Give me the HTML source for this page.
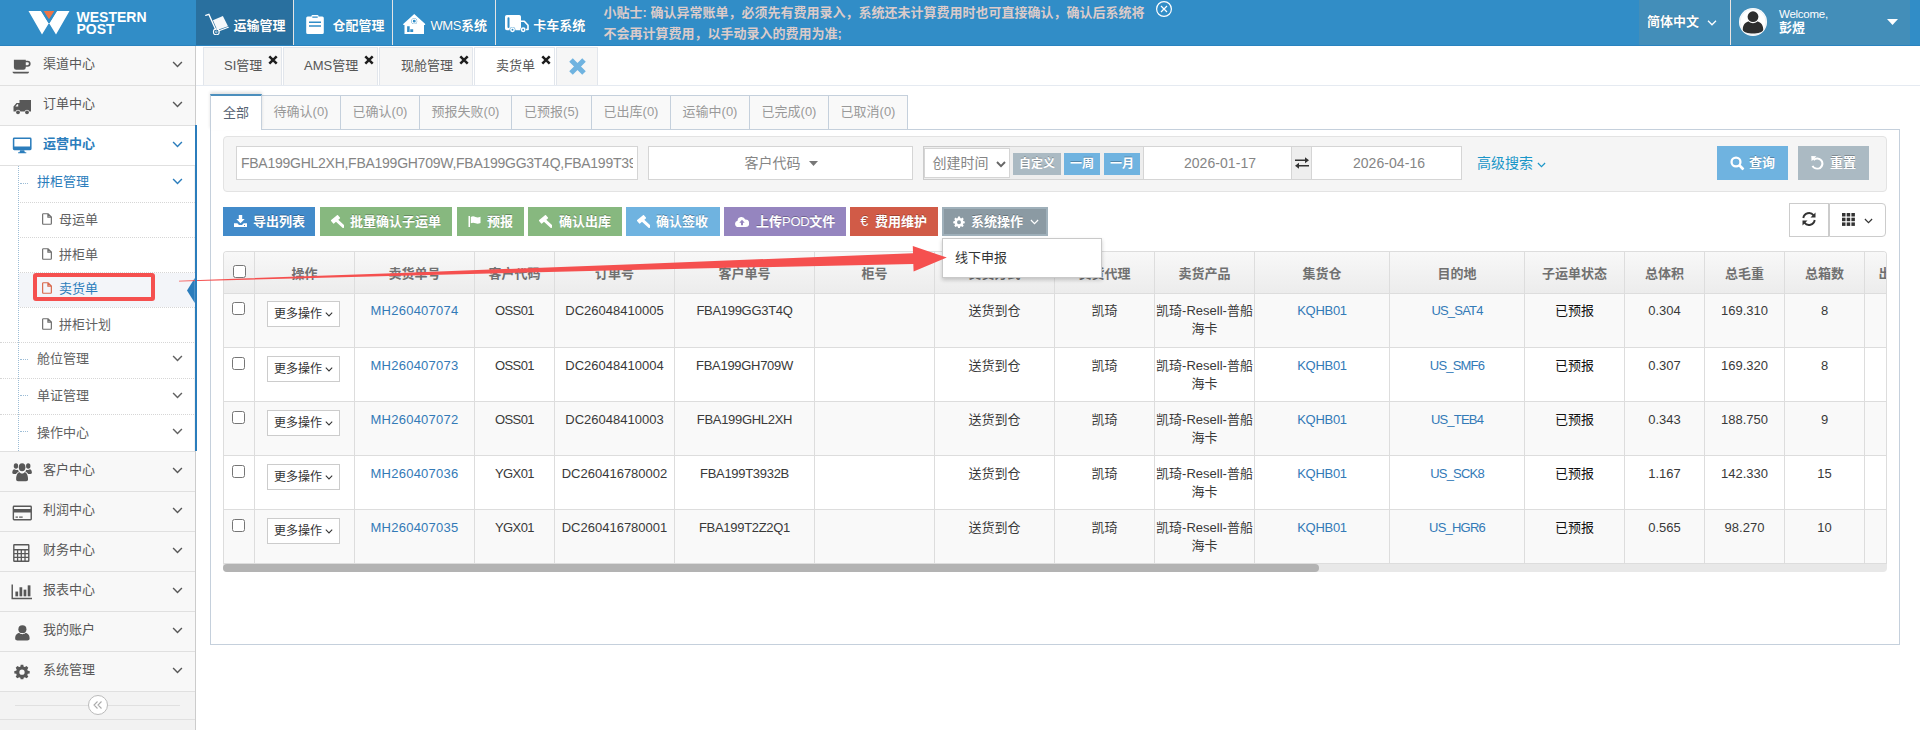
<!DOCTYPE html>
<html lang="zh-CN">
<head>
<meta charset="utf-8">
<title>卖货单</title>
<style>
*{box-sizing:border-box;margin:0;padding:0}
html,body{width:1920px;height:730px;overflow:hidden;background:#fff}
body{font-family:"Liberation Sans","Noto Sans CJK SC",sans-serif;font-size:13px;color:#393939;position:relative;line-height:1.428571}
.abs{position:absolute}
svg{display:block;overflow:visible}
svg use{fill:currentColor}
#hdr{position:absolute;left:0;top:0;width:1920px;height:46px;background:#318dc7;border-bottom:1px solid #2a83bf;z-index:5}
.logo{color:#fff;font-weight:bold;font-size:14px;line-height:16px;letter-spacing:0}
#hdr .nav{position:absolute;top:0;height:45px;color:#fff;font-weight:bold;font-size:13px;line-height:45px;white-space:nowrap}
#hdr .nav.on{background:#29709f}
#hdr .sep{position:absolute;top:0;width:1px;height:45px;background:#e4e4e4}
#hdr .nav span{position:absolute;top:3px;text-shadow:0 0 1px rgba(0,0,0,.25)}
#tip{position:absolute;left:603.5px;top:1.5px;width:560px;font-size:13px;font-weight:bold;color:#dbcbca;line-height:21px;white-space:nowrap}
#ublk{position:absolute;left:1639px;top:0;width:271px;height:45px;background:#438eb9}
#side{position:absolute;left:0;top:45px;width:196px;height:685px;background:#f2f2f2;border-right:1px solid #ccc}
.mi{position:absolute;left:0;width:195px;height:41px;background:#f8f8f8;border-top:1px solid #e0e0e0;border-bottom:1px solid #e0e0e0;color:#585858;font-size:13px;line-height:36.4px}
.mi.on{background:#fff;color:#2b7dbc;font-weight:bold}
.mi .t{position:absolute;left:43px;top:0}
.mi svg.ch{position:absolute;left:172px;top:15.4px}
.sm{position:absolute;left:0;width:194px;background:#fff;color:#616161;font-size:13px}
.sm .t{position:absolute;white-space:nowrap}
.tab{position:absolute;top:47px;height:38px;background:#f6f6f6;border:1px solid #e2e6ec;border-bottom:none;color:#555;font-size:13px;line-height:36px;white-space:nowrap}
.tab .x{position:absolute;top:6.500px;width:10px;height:10px}
.st{position:absolute;top:95px;height:35px;background:#f9f9f9;border:1px solid #c5d0dc;color:#999;font-size:13px;line-height:32px;text-align:center;white-space:nowrap}
.inp{position:absolute;height:34px;border:1px solid #d5d5d5;background:#fff;color:#858585;font-size:14px;line-height:32px;text-align:center;white-space:nowrap}
.sbtn{position:absolute;top:153px;height:22px;color:#fff;font-size:12px;font-weight:bold;line-height:22px;text-align:center;text-shadow:0 -1px 0 rgba(0,0,0,.25)}
.qb{top:146px;width:71px;height:34px;color:#fff;font-weight:bold;font-size:13px;line-height:34px;text-shadow:0 -1px 0 rgba(0,0,0,.25)}
.qb span{position:absolute;top:0}
.btn{position:absolute;top:207px;height:29px;color:#fff;font-weight:bold;font-size:13px;line-height:29px;white-space:nowrap;text-shadow:0 -1px 0 rgba(0,0,0,.25)}
.btn span{position:absolute;top:0}
#tbl{position:absolute;left:223px;top:251px;width:1664px;height:314px;overflow:hidden;border:1px solid #ddd;border-bottom:none;border-radius:4px 4px 0 0}
.th{position:absolute;top:0;height:42px;border-right:1px solid #ddd;border-bottom:1px solid #ddd;background:linear-gradient(#f8f8f8,#ececec);color:#707070;font-weight:bold;font-size:13px;line-height:43px;text-align:center;white-space:nowrap;overflow:hidden}
.td{position:absolute;height:54px;border-right:1px solid #ddd;border-bottom:1px solid #ddd;padding:9px 0 0;color:#393939;font-size:13px;line-height:18px;text-align:center;overflow:hidden}
.lnk{color:#337ab7}
.odd{background:#f9f9f9}
.even{background:#fff}
.cb{position:absolute;width:13px;height:13px;border:1px solid #767676;border-radius:2.5px;background:#fff}
.more{position:absolute;left:12px;top:8px;width:73px;height:26px;border:1px solid #ccc;background:#fff;font-size:12px;line-height:24px;color:#333;text-align:left;padding-left:6px;white-space:nowrap}

</style>
</head>
<body>
<svg width="0" height="0" style="position:absolute">
<defs>
<symbol id="i-chev" viewBox="0 0 10 6"><path d="M1 .8 L5 4.8 L9 .8" fill="none" stroke="currentColor" stroke-width="1.3"/></symbol>
<symbol id="i-chev2" viewBox="0 0 10 7"><path d="M1 1 L5 5.2 L9 1" fill="none" stroke="currentColor" stroke-width="1.9"/></symbol>
<symbol id="i-coffee" preserveAspectRatio="none" viewBox="0 0 20 20"><path d="M2 3 H14.5 V4 H16.5 A3 3 0 0 1 16.5 10.2 H14.5 V11 A2.5 2.5 0 0 1 12 13.5 H4.5 A2.5 2.5 0 0 1 2 11 Z M14.5 5.6 V8.6 H16.3 A1.5 1.5 0 0 0 16.3 5.6 Z" fill-rule="evenodd"/><path d="M.5 15.5 H18 C18 17 16.5 17.3 15.5 17.3 H3 C2 17.3 .5 17 .5 15.5Z"/></symbol>
<symbol id="i-truck" preserveAspectRatio="none" viewBox="0 0 20 20"><path d="M7.5 3 H19 V14.5 H17.4 A2.5 2.5 0 0 0 12.6 14.5 H8.4 A2.5 2.5 0 0 0 3.600 14.5 H1.5 V9.500 L4.5 6 H7.5 Z M3.4 9.600 H6.2 V7.2 H5.2 Z" fill-rule="evenodd"/><circle cx="6" cy="15.3" r="1.9"/><circle cx="15" cy="15.3" r="1.900"/></symbol>
<symbol id="i-desktop" preserveAspectRatio="none" viewBox="0 0 20 20"><path d="M2.200 2.500 H17.8 A1.400 1.400 0 0 1 19.200 3.900 V13.600 A1.400 1.400 0 0 1 17.8 15 H2.200 A1.400 1.400 0 0 1 .8 13.600 V3.900 A1.400 1.400 0 0 1 2.200 2.500 Z M2.300 4 V11.400 H17.700 V4 Z" fill-rule="evenodd"/><path d="M8 15 H12 L12.600 17 H14 V18 H6 V17 H7.400 Z"/></symbol>
<symbol id="i-users" preserveAspectRatio="none" viewBox="0 0 22 20"><circle cx="11" cy="6.500" r="3.600"/><path d="M4.500 17.500 C4.500 12.500 7 11 8.300 11 C9 11.800 10 12.100 11 12.100 C12 12.100 13 11.800 13.700 11 C15 11 17.500 12.500 17.500 17.500 C17.500 18.600 16.500 19 15.500 19 H6.500 C5.500 19 4.500 18.600 4.500 17.500Z"/><circle cx="4.300" cy="5.400" r="2.400"/><circle cx="17.700" cy="5.400" r="2.400"/><path d="M.3 11.500 C.3 9.200 1.500 8.300 2.500 8.300 C3.500 9 5.500 9.100 6.600 8.600 C6.800 9.500 7.100 10 7.600 10.400 C6 10.700 5 11.500 4.400 12.500 H1.800 C.8 12.500 .3 12.200 .3 11.500Z"/><path d="M21.700 11.500 C21.700 9.200 20.500 8.300 19.500 8.300 C18.500 9 16.500 9.100 15.400 8.600 C15.200 9.500 14.900 10 14.400 10.400 C16 10.700 17 11.500 17.600 12.500 H20.200 C21.200 12.500 21.700 12.200 21.700 11.500Z"/></symbol>
<symbol id="i-card" preserveAspectRatio="none" viewBox="0 0 22 20"><path d="M2.200 2.500 H19.800 A1.500 1.500 0 0 1 21.300 4 V16 A1.500 1.500 0 0 1 19.800 17.500 H2.200 A1.500 1.500 0 0 1 .7 16 V4 A1.500 1.500 0 0 1 2.200 2.500 Z M2.200 4 V6 H19.800 V4 Z M2.200 9.500 V16 H19.800 V9.500 Z M3.800 13.500 H6.300 V14.800 H3.800 Z M7.600 13.500 H11.400 V14.800 H7.600 Z" fill-rule="evenodd"/></symbol>
<symbol id="i-calc" preserveAspectRatio="none" viewBox="0 0 20 20"><path d="M2.500 1 H17.500 A1.300 1.300 0 0 1 18.800 2.300 V17.700 A1.300 1.300 0 0 1 17.500 19 H2.500 A1.300 1.300 0 0 1 1.200 17.700 V2.300 A1.300 1.300 0 0 1 2.500 1 Z M2.700 2.500 V6 H17.300 V2.500 Z M2.700 7.500 V10 H5.300 V7.500 Z M6.700 7.500 V10 H9.300 V7.500 Z M10.700 7.500 V10 H13.300 V7.500 Z M14.700 7.500 V10 H17.300 V7.500 Z M2.700 11.300 V13.800 H5.300 V11.300 Z M6.700 11.300 V13.800 H9.300 V11.300 Z M10.700 11.300 V13.800 H13.300 V11.300 Z M14.700 11.300 V13.800 H17.300 V11.300 Z M2.700 15.100 V17.600 H5.300 V15.100 Z M6.700 15.100 V17.600 H9.300 V15.100 Z M10.700 15.100 V17.600 H13.300 V15.100 Z M14.700 15.100 V17.600 H17.300 V15.100 Z" fill-rule="evenodd"/></symbol>
<symbol id="i-bars" preserveAspectRatio="none" viewBox="0 0 22 20"><path d="M.5 2.500 H2 V16.500 H21.500 V18 H.5 Z"/><rect x="4.500" y="10" width="2.800" height="5"/><rect x="8.700" y="5.500" width="2.800" height="9.500"/><rect x="12.900" y="8" width="2.800" height="7"/><rect x="17.100" y="3.500" width="2.800" height="11.500"/></symbol>
<symbol id="i-user" preserveAspectRatio="none" viewBox="0 0 20 20"><circle cx="10" cy="5.800" r="4.300"/><path d="M2.300 16 C2.300 11.500 5 10 6.700 10 C7.600 10.900 8.800 11.300 10 11.300 C11.200 11.300 12.400 10.900 13.300 10 C15 10 17.700 11.500 17.700 16 C17.700 17.500 16.500 18.200 15.300 18.200 H4.700 C3.500 18.200 2.300 17.500 2.300 16Z"/></symbol>
<symbol id="i-cog" preserveAspectRatio="none" viewBox="0 0 20 20"><path d="M8.400 1 H11.600 L12.100 3.400 L13.600 4 L15.700 2.700 L17.900 4.900 L16.600 7 L17.200 8.500 L19.600 9 V12.100 L17.200 12.600 L16.600 14.100 L17.900 16.200 L15.700 18.400 L13.600 17.100 L12.100 17.700 L11.600 20 H8.400 L7.900 17.700 L6.400 17.100 L4.300 18.400 L2.100 16.200 L3.400 14.100 L2.800 12.600 L.4 12.100 V9 L2.800 8.500 L3.400 7 L2.100 4.900 L4.300 2.700 L6.400 4 L7.900 3.400 Z M10 7.200 A3.300 3.300 0 1 0 10 13.800 A3.300 3.300 0 1 0 10 7.200 Z" fill-rule="evenodd"/></symbol>
<symbol id="i-file" viewBox="0 0 11 13"><path d="M1.500 .7 H6.700 L10.300 4.300 V11.500 A.8 .8 0 0 1 9.500 12.300 H1.500 A.8 .8 0 0 1 .7 11.500 V1.500 A.8 .8 0 0 1 1.500 .7 Z M6.500 1 V4.500 H10" fill="none" stroke="currentColor" stroke-width="1.300"/></symbol>
<symbol id="i-cart" viewBox="0 0 24 22"><path d="M.7 2.3 L3.900 1.400 L10.500 16.200" fill="none" stroke="currentColor" stroke-width="1.300" stroke-linecap="round"/><circle cx="11.300" cy="18.900" r="2.900" fill="none" stroke="currentColor" stroke-width="1.100"/><circle cx="11.300" cy="18.900" r=".9" fill="none" stroke="currentColor" stroke-width=".6"/><path d="M14 17.800 L23.300 14.300" fill="none" stroke="currentColor" stroke-width="1.200" stroke-linecap="round"/><path d="M7.900 7.300 L17.900 2.900 L23 13.200 L12.250 17 Z" opacity=".95"/></symbol>
<symbol id="i-clip" viewBox="0 0 18 19"><path d="M5.500 .8 A1 1 0 0 1 6.500 0 H11.500 A1 1 0 0 1 12.500 .8 V1.500 H16.300 A1.500 1.500 0 0 1 17.800 3 V17.500 A1.500 1.500 0 0 1 16.300 19 H1.700 A1.500 1.500 0 0 1 .2 17.500 V3 A1.500 1.500 0 0 1 1.700 1.500 H5.500 Z M6.300 1.600 V2.800 H11.700 V1.600 Z M3 6.400 V8 H15 V6.400 Z M3 10.200 V11.800 H15 V10.200 Z" fill-rule="evenodd"/></symbol>
<symbol id="i-house" viewBox="0 0 23 21"><path d="M11.500 0 L22.800 10.300 V11.300 H21.500 V20.500 H1.500 V11.300 H.2 V10.300 Z M11.500 4.300 A3 3 0 1 0 11.500 10.300 A3 3 0 1 0 11.500 4.300 Z M4.200 12.600 V18.400 H6.800 V12.600 Z M7.400 15.600 V18.400 H10.400 V15.600 Z" fill-rule="evenodd"/><circle cx="11.500" cy="7.300" r="2.100" fill="none" stroke="currentColor" stroke-width="1.200"/></symbol>
<symbol id="i-truck2" viewBox="0 0 24 18"><path d="M1.800 0 H14.200 A1.800 1.800 0 0 1 16 1.800 V15.300 H1.800 A1.800 1.800 0 0 1 0 13.500 V1.800 A1.800 1.800 0 0 1 1.800 0 Z M3.500 2.200 A1 1 0 0 0 2.500 3.200 V12 A1 1 0 0 0 3.500 13 A1 1 0 0 0 4.500 12 V3.200 A1 1 0 0 0 3.500 2.200 Z" fill-rule="evenodd"/><path d="M16 6.200 H19.300 L23 10.300 V14.500 H16" fill="none" stroke="currentColor" stroke-width="1.600" stroke-linejoin="round"/><circle cx="7.500" cy="14.800" r="2.900" fill="#318dc7"/><circle cx="18.200" cy="14.800" r="2.900" fill="#318dc7"/><circle cx="7.500" cy="14.800" r="1.700" fill="none" stroke="currentColor" stroke-width="1.500"/><circle cx="18.200" cy="14.800" r="1.700" fill="none" stroke="currentColor" stroke-width="1.500"/></symbol>
<symbol id="i-download" viewBox="0 0 13 12"><path d="M4.800 0 H8.200 V4 H10.700 L6.500 8.300 L2.300 4 H4.800 Z"/><path d="M0 8.300 H3.300 L5 10 H8 L9.700 8.300 H13 V12 H0 Z M10 10 V11 H11 V10 Z" fill-rule="evenodd"/></symbol>
<symbol id="i-gavel" viewBox="0 0 13 13"><g transform="translate(4.500 4.300) rotate(-40)"><rect x="-4.500" y="-2.200" width="9" height="4.400" rx=".7"/></g><g transform="translate(4.500 4.300) rotate(42)"><rect x="1.500" y="-1.500" width="10.300" height="3.100" rx=".5"/></g></symbol>
<symbol id="i-flag" viewBox="0 0 12 11"><rect x="0" y="0" width="1.500" height="11"/><path d="M2.300 1 C4 0 5.500 .3 7 1 C8.500 1.700 10 1.700 12 .8 V7 C10 8 8.500 8 7 7.300 C5.500 6.600 4 6.400 2.300 7.300 Z"/></symbol>
<symbol id="i-cloud" viewBox="0 0 14 11"><path d="M3.200 11 A3.200 3.200 0 0 1 2.500 4.700 A4 4 0 0 1 10.200 3.600 A3.700 3.700 0 0 1 10.800 11 Z M7 3.800 L4.300 6.800 H6 V9.300 H8 V6.800 H9.700 Z" fill-rule="evenodd"/></symbol>
<symbol id="i-search" viewBox="0 0 14 14"><circle cx="5.800" cy="5.800" r="4.300" fill="none" stroke="currentColor" stroke-width="2.200"/><path d="M9 9 L13 13" stroke="currentColor" stroke-width="2.600" fill="none"/></symbol>
<symbol id="i-undo" viewBox="0 0 12 13"><path d="M2.200 3.800 A5 5 0 1 1 1.200 9.500" fill="none" stroke="currentColor" stroke-width="2"/><path d="M0 0 L5 .3 L.3 5 Z"/></symbol>
<symbol id="i-refresh" viewBox="0 0 14 14"><path d="M1.300 6 A5.800 5.800 0 0 1 11.600 3.300" fill="none" stroke="currentColor" stroke-width="1.900"/><path d="M13.500 .5 V5.500 H8.500 Z"/><path d="M12.700 8 A5.800 5.800 0 0 1 2.400 10.700" fill="none" stroke="currentColor" stroke-width="1.900"/><path d="M.5 13.500 V8.500 H5.500 Z"/></symbol>
<symbol id="i-th" viewBox="0 0 13 13"><rect x="0" y="0" width="3.500" height="3.500"/><rect x="4.700" y="0" width="3.500" height="3.500"/><rect x="9.400" y="0" width="3.500" height="3.500"/><rect x="0" y="4.700" width="3.500" height="3.500"/><rect x="4.700" y="4.700" width="3.500" height="3.500"/><rect x="9.400" y="4.700" width="3.500" height="3.500"/><rect x="0" y="9.400" width="3.500" height="3.500"/><rect x="4.700" y="9.400" width="3.500" height="3.500"/><rect x="9.400" y="9.400" width="3.500" height="3.500"/></symbol>
<symbol id="i-exch" viewBox="0 0 14 12"><path d="M0 2.500 H10 V.3 L14 3.300 L10 6.300 V4.100 H0 Z"/><path d="M14 7.900 H4 V5.700 L0 8.700 L4 11.700 V9.500 H14 Z"/></symbol>
</defs>
</svg>

<div id="hdr">
<svg class="abs" style="left:28px;top:10px" width="42" height="25" viewBox="0 0 42 25">
<polygon points="0.5,1 13,1 21,14 29,1 41.5,1 28,24.5 21,13 14,24.5" fill="#fff"/>
<polygon points="15.5,1 26.5,1 21,9.5" fill="#ee7548"/>
<polygon points="13.2,1 15.5,1 21,9.5 26.5,1 28.8,1 21,13.6" fill="#318dc7"/>
</svg>
<div class="abs logo" style="left:76.5px;top:8.5px">WESTERN</div><div class="abs logo" style="left:76.5px;top:21.3px">POST</div>
<div class="nav on" style="left:196px;width:97px"><svg class="" width="24" height="22" style="position:absolute;left:9px;top:12.5px;" ><use href="#i-cart"/></svg><span style="left:37.5px">运输管理</span></div>
<div class="sep" style="left:293px"></div>
<div class="nav" style="left:294px;width:98px"><svg class="" width="18" height="19" style="position:absolute;left:12px;top:15.2px;" ><use href="#i-clip"/></svg><span style="left:38.6px">仓配管理</span></div>
<div class="sep" style="left:392px"></div>
<div class="nav" style="left:393px;width:102px"><svg class="" width="22.5" height="20.5" style="position:absolute;left:10px;top:13.6px;" ><use href="#i-house"/></svg><span style="left:37.5px"><b style="font-weight:normal;letter-spacing:-.4px">WMS</b>系统</span></div>
<div class="sep" style="left:495px"></div>
<div class="nav" style="left:496px;width:100px"><svg class="" width="24" height="18" style="position:absolute;left:9.4px;top:14.9px;" ><use href="#i-truck2"/></svg><span style="left:37.3px">卡车系统</span></div>
<div id="tip">小贴士: 确认异常账单，必须先有费用录入，系统还未计算费用时也可直接确认，确认后系统将<br>不会再计算费用，以手动录入的费用为准;</div>
<svg class="abs" style="left:1155px;top:0px" width="18" height="18" viewBox="0 0 18 18"><circle cx="9" cy="9" r="7.4" fill="none" stroke="#fff" stroke-width="1.2"/><path d="M6 6 L12 12 M12 6 L6 12" stroke="#fff" stroke-width="1.2" fill="none"/></svg>
<div id="ublk">
<div class="abs" style="left:8px;top:11.7px;font-size:13px;font-weight:bold;color:#fff;line-height:20px;text-shadow:0 0 1px rgba(0,0,0,.3)">简体中文</div>
<svg class="" width="10" height="6" style="position:absolute;left:68px;top:20px;color:#fff;" ><use href="#i-chev"/></svg>
<div class="abs" style="left:91px;top:0;width:1px;height:45px;background:#ece4e1"></div>
<svg class="abs" style="left:100px;top:8px" width="28" height="28" viewBox="0 0 28 28"><circle cx="14" cy="14" r="14" fill="#fff"/><circle cx="14" cy="14" r="13" fill="none" stroke="#dfe6ec" stroke-width=".6"/><circle cx="14" cy="8.700" r="5.4" fill="#2e2e2e"/><path d="M3.8 21.5 C3.8 15.5 8 13.6 9.8 13.6 C11 14.8 12.4 15.3 14 15.3 C15.6 15.3 17 14.8 18.2 13.6 C20 13.6 24.2 15.5 24.2 21.5 C24.2 24 19 25.6 14 25.6 C9 25.6 3.8 24 3.8 21.5Z" fill="#2e2e2e"/></svg>
<div class="abs" style="left:140px;top:7px;font-size:11.5px;letter-spacing:-.25px;color:#fff;line-height:15px">Welcome,</div>
<div class="abs" style="left:140px;top:20.4px;font-size:13px;color:#fff;font-weight:bold;line-height:16px">彭煜</div>
<svg class="abs" style="left:248px;top:19px" width="11" height="6" viewBox="0 0 11 6"><polygon points="0,0 11,0 5.5,6" fill="#fff"/></svg>
</div>
</div>
<div id="side">
<div class="mi" style="top:0px"><svg class="" width="19" height="19" style="position:absolute;left:12.35px;top:11.4px;" preserveAspectRatio="none"><use href="#i-coffee"/></svg><span class="t">渠道中心</span><svg class="ch" width="11" height="7" style="" ><use href="#i-chev"/></svg></div>
<div class="mi" style="top:40px"><svg class="" width="20" height="20" style="position:absolute;left:12.35px;top:10.7px;" preserveAspectRatio="none"><use href="#i-truck"/></svg><span class="t">订单中心</span><svg class="ch" width="11" height="7" style="" ><use href="#i-chev"/></svg></div>
<div class="mi on" style="top:80px"><svg class="" width="20.4" height="20.4" style="position:absolute;left:12px;top:9.25px;" preserveAspectRatio="none"><use href="#i-desktop"/></svg><span class="t">运营中心</span><svg class="ch" width="11" height="7" style="" ><use href="#i-chev"/></svg></div>
<div class="sm" style="top:121px;height:285px">
<div class="abs" style="left:18px;top:0;width:0;height:285px;border-left:1px dotted #9dbdd6"></div>
<div class="abs" style="left:0;top:0px;width:194px;height:0;border-top:0"></div><div class="abs" style="left:20px;top:17px;width:8px;height:0;border-top:1px dotted #9dbdd6"></div><div class="t" style="left:37px;top:-2px;line-height:36px;color:#2b7dbc">拼柜管理</div><svg class="" width="11" height="7" style="position:absolute;left:172px;top:12px;color:#2b7dbc;" ><use href="#i-chev"/></svg>
<div class="abs" style="left:20px;top:36px;width:175px;height:0;border-top:1px dotted #d6d6d6"></div><svg class="" width="10" height="12" style="position:absolute;left:41.5px;top:46.5px;color:#6e6e6e;" ><use href="#i-file"/></svg><div class="t" style="left:59px;top:35.5px;line-height:35px;color:#616161">母运单</div>
<div class="abs" style="left:20px;top:71px;width:175px;height:0;border-top:1px dotted #d6d6d6"></div><svg class="" width="10" height="12" style="position:absolute;left:41.5px;top:81.5px;color:#6e6e6e;" ><use href="#i-file"/></svg><div class="t" style="left:59px;top:70.5px;line-height:35px;color:#616161">拼柜单</div>
<div class="abs" style="left:19px;top:107px;width:176px;height:34px;background:#f3f5f9"></div><div class="abs" style="left:20px;top:106px;width:175px;height:0;border-top:1px dotted #d6d6d6"></div><svg class="" width="10" height="12" style="position:absolute;left:41.5px;top:116px;color:#d9684c;" ><use href="#i-file"/></svg><div class="t" style="left:59px;top:105px;line-height:35px;color:#2b7dbc">卖货单</div>
<div class="abs" style="left:20px;top:141px;width:175px;height:0;border-top:1px dotted #d6d6d6"></div><svg class="" width="10" height="12" style="position:absolute;left:41.5px;top:151.5px;color:#6e6e6e;" ><use href="#i-file"/></svg><div class="t" style="left:59px;top:140.5px;line-height:35px;color:#616161">拼柜计划</div>
<div class="abs" style="left:0;top:176px;width:194px;height:0;border-top:1px dotted #d6d6d6"></div><div class="abs" style="left:20px;top:193px;width:8px;height:0;border-top:1px dotted #9dbdd6"></div><div class="t" style="left:37px;top:175px;line-height:36px;color:#616161">舱位管理</div><svg class="" width="11" height="7" style="position:absolute;left:172px;top:189px;color:#616161;" ><use href="#i-chev"/></svg>
<div class="abs" style="left:0;top:212px;width:194px;height:0;border-top:1px dotted #d6d6d6"></div><div class="abs" style="left:20px;top:229px;width:8px;height:0;border-top:1px dotted #9dbdd6"></div><div class="t" style="left:37px;top:211.5px;line-height:36px;color:#616161">单证管理</div><svg class="" width="11" height="7" style="position:absolute;left:172px;top:225.5px;color:#616161;" ><use href="#i-chev"/></svg>
<div class="abs" style="left:0;top:248px;width:194px;height:0;border-top:1px dotted #d6d6d6"></div><div class="abs" style="left:20px;top:265px;width:8px;height:0;border-top:1px dotted #9dbdd6"></div><div class="t" style="left:37px;top:248px;line-height:37px;color:#616161">操作中心</div><svg class="" width="11" height="7" style="position:absolute;left:172px;top:262px;color:#616161;" ><use href="#i-chev"/></svg>
</div>
<div class="abs" style="left:195px;top:80px;width:2px;height:326px;background:#2b7dbc;z-index:3"></div>
<svg class="abs" style="left:187.3px;top:233px" width="7.8" height="25" preserveAspectRatio="none" viewBox="0 0 8 25"><polygon points="8,0 8,25 0,12.5" fill="#2b7dbc"/></svg>
<div class="mi" style="top:406px"><svg class="" width="20.2" height="22.4" style="position:absolute;left:12.05px;top:8.3px;" preserveAspectRatio="none"><use href="#i-users"/></svg><span class="t">客户中心</span><svg class="ch" width="11" height="7" style="" ><use href="#i-chev"/></svg></div>
<div class="mi" style="top:446px"><svg class="" width="20.6" height="19.9" style="position:absolute;left:11.65px;top:10.5px;" preserveAspectRatio="none"><use href="#i-card"/></svg><span class="t">利润中心</span><svg class="ch" width="11" height="7" style="" ><use href="#i-chev"/></svg></div>
<div class="mi" style="top:486px"><svg class="" width="18.6" height="20" style="position:absolute;left:12.1px;top:10.75px;" preserveAspectRatio="none"><use href="#i-calc"/></svg><span class="t">财务中心</span><svg class="ch" width="11" height="7" style="" ><use href="#i-chev"/></svg></div>
<div class="mi" style="top:526px"><svg class="" width="21.5" height="19.1" style="position:absolute;left:11px;top:10.4px;" preserveAspectRatio="none"><use href="#i-bars"/></svg><span class="t">报表中心</span><svg class="ch" width="11" height="7" style="" ><use href="#i-chev"/></svg></div>
<div class="mi" style="top:566px"><svg class="" width="18.8" height="18" style="position:absolute;left:12.95px;top:11.6px;" preserveAspectRatio="none"><use href="#i-user"/></svg><span class="t">我的账户</span><svg class="ch" width="11" height="7" style="" ><use href="#i-chev"/></svg></div>
<div class="mi" style="top:606px"><svg class="" width="16" height="15.6" style="position:absolute;left:14.2px;top:12.2px;" preserveAspectRatio="none"><use href="#i-cog"/></svg><span class="t">系统管理</span><svg class="ch" width="11" height="7" style="" ><use href="#i-chev"/></svg></div>
<div class="abs" style="left:0;top:646px;width:195px;height:29px;background:#f3f3f3;border-top:1px solid #e0e0e0;border-bottom:1px solid #e0e0e0"></div>
<div class="abs" style="left:15px;top:660px;width:165px;height:1px;background:#e0e0e0"></div>
<svg class="abs" style="left:87px;top:649px" width="22" height="22" viewBox="0 0 22 22"><circle cx="11" cy="11" r="9.5" fill="#fff" stroke="#bbb" stroke-width="1"/><path d="M10.5 7.5 L7 11 L10.5 14.5 M14.5 7.5 L11 11 L14.5 14.5" fill="none" stroke="#aaa" stroke-width="1.1"/></svg>
</div>
<div class="abs" style="left:196px;top:85px;width:1724px;height:1px;background:#e5eaf1"></div>
<div class="tab" style="left:203px;width:79px;background:#f6f6f6"><span class="abs" style="left:20px;top:0">SI管理</span><svg class="x" style="left:64px" viewBox="0 0 10 10"><path d="M1.3 1.3 L8.7 8.7 M8.7 1.3 L1.3 8.7" stroke="#1e1e1e" stroke-width="2.5" fill="none"/></svg></div>
<div class="tab" style="left:283px;width:95px;background:#f6f6f6"><span class="abs" style="left:20px;top:0">AMS管理</span><svg class="x" style="left:80px" viewBox="0 0 10 10"><path d="M1.3 1.3 L8.7 8.7 M8.7 1.3 L1.3 8.7" stroke="#1e1e1e" stroke-width="2.5" fill="none"/></svg></div>
<div class="tab" style="left:379px;width:94px;background:#f6f6f6"><span class="abs" style="left:21px;top:0">现舱管理</span><svg class="x" style="left:79px" viewBox="0 0 10 10"><path d="M1.3 1.3 L8.7 8.7 M8.7 1.3 L1.3 8.7" stroke="#1e1e1e" stroke-width="2.5" fill="none"/></svg></div>
<div class="tab" style="left:474px;width:81px;background:#fff"><span class="abs" style="left:21px;top:0">卖货单</span><svg class="x" style="left:66px" viewBox="0 0 10 10"><path d="M1.3 1.3 L8.7 8.7 M8.7 1.3 L1.3 8.7" stroke="#1e1e1e" stroke-width="2.5" fill="none"/></svg></div>
<div class="tab" style="left:556px;width:42px"><svg class="abs" style="left:12px;top:10px" width="17" height="17" viewBox="0 0 17 17"><path d="M2 2 L15 15 M15 2 L2 15" stroke="#6fb3e0" stroke-width="5" fill="none"/></svg></div>
<div class="abs" style="left:210px;top:129px;width:1690px;height:516px;border:1px solid #c5d0dc"></div>
<div class="st" style="left:261px;width:80px">待确认(0)</div>
<div class="st" style="left:340px;width:80px">已确认(0)</div>
<div class="st" style="left:419px;width:93px">预报失败(0)</div>
<div class="st" style="left:511px;width:81px">已预报(5)</div>
<div class="st" style="left:591px;width:80px">已出库(0)</div>
<div class="st" style="left:670px;width:80px">运输中(0)</div>
<div class="st" style="left:749px;width:80px">已完成(0)</div>
<div class="st" style="left:828px;width:80px">已取消(0)</div>
<div class="abs" style="left:210px;top:94px;width:52px;height:36px;background:#fff;border:1px solid #c5d0dc;border-top:2px solid #4c8fbd;border-bottom:none;color:#576373;font-size:13px;line-height:33px;text-align:center;box-shadow:0 -2px 3px 0 rgba(0,0,0,.12)">全部</div>
<div class="abs" style="left:223px;top:136px;width:1664px;height:56px;background:#f5f5f5;border:1px solid #e3e3e3;border-radius:4px"></div>
<div class="inp" style="left:236px;top:146px;width:402px;text-align:left;padding-left:4px;letter-spacing:-.26px"><span style="display:block;width:392px;overflow:hidden">FBA199GHL2XH,FBA199GH709W,FBA199GG3T4Q,FBA199T3932B,FBA199T2Z2Q1</span></div>
<div class="inp" style="left:648px;top:146px;width:265px;padding-right:16px">客户代码<svg class="abs" style="left:160px;top:14px" width="9" height="5" viewBox="0 0 9 5"><polygon points="0,0 9,0 4.5,5" fill="#777"/></svg></div>
<div class="abs" style="left:923px;top:146px;width:88px;height:34px;border:1px solid #ccc;background:#eee"></div>
<div class="abs" style="left:924px;top:148px;width:86px;height:30px;border:1px solid #d5d5d5;background:#fff;color:#858585;font-size:14px;line-height:28.6px;padding-left:7.5px">创建时间</div>
<svg class="" width="10" height="7" style="position:absolute;left:996px;top:161px;color:#666;" ><use href="#i-chev2"/></svg>
<div class="abs" style="left:1010px;top:146px;width:134px;height:34px;border:1px solid #d5d5d5;border-left:none;background:#eee"></div>
<div class="sbtn" style="left:1013px;width:48px;background:#abbac3">自定义</div>
<div class="sbtn" style="left:1064px;width:36px;background:#6fb3e0">一周</div>
<div class="sbtn" style="left:1104px;width:36px;background:#6fb3e0">一月</div>
<div class="inp" style="left:1143px;top:146px;width:149px;padding-left:5px;letter-spacing:.05px">2026-01-17</div>
<div class="abs" style="left:1291px;top:146px;width:21px;height:34px;border:1px solid #d5d5d5;background:#eee"></div>
<svg class="" width="14" height="12" style="position:absolute;left:1295px;top:157px;color:#333;" ><use href="#i-exch"/></svg>
<div class="inp" style="left:1311px;top:146px;width:151px;padding-left:5px;letter-spacing:.05px">2026-04-16</div>
<div class="abs" style="left:1477px;top:153px;font-size:14px;color:#1a96c8;line-height:20px">高级搜索</div>
<svg class="" width="9" height="6" style="position:absolute;left:1537px;top:162px;color:#1a96c8;" ><use href="#i-chev"/></svg>
<div class="abs qb" style="left:1717px;background:#6fb3e0"><svg class="" width="14.5" height="14.5" style="position:absolute;left:12.5px;top:9.6px;color:#fff;" ><use href="#i-search"/></svg><span style="left:32px">查询</span></div>
<div class="abs qb" style="left:1798px;background:#abbac3"><svg class="" width="13" height="13.5" style="position:absolute;left:13.2px;top:9.6px;color:#fff;" ><use href="#i-undo"/></svg><span style="left:32px">重置</span></div>
<div class="btn" style="left:223px;width:92px;background:#428bca;"><svg class="" width="13" height="12" style="position:absolute;left:10.7px;top:8px;color:#fff;" ><use href="#i-download"/></svg><span style="left:30px">导出列表</span></div>
<div class="btn" style="left:320px;width:132px;background:#87b87f;"><svg class="" width="13" height="13" style="position:absolute;left:11px;top:8px;color:#fff;" ><use href="#i-gavel"/></svg><span style="left:30px">批量确认子运单</span></div>
<div class="btn" style="left:457px;width:67px;background:#87b87f;"><svg class="" width="13" height="11" style="position:absolute;left:11px;top:9px;color:#fff;" ><use href="#i-flag"/></svg><span style="left:30px">预报</span></div>
<div class="btn" style="left:528px;width:94px;background:#87b87f;"><svg class="" width="13" height="13" style="position:absolute;left:11.4px;top:8px;color:#fff;" ><use href="#i-gavel"/></svg><span style="left:31px">确认出库</span></div>
<div class="btn" style="left:626px;width:94px;background:#6fb3e0;"><svg class="" width="13" height="13" style="position:absolute;left:11px;top:8px;color:#fff;" ><use href="#i-gavel"/></svg><span style="left:30px">确认签收</span></div>
<div class="btn" style="left:724px;width:122px;background:#9585bf;"><svg class="" width="14" height="11" style="position:absolute;left:10.5px;top:9px;color:#fff;" ><use href="#i-cloud"/></svg><span style="left:32px">上传<b style="font-weight:normal;letter-spacing:-.3px">POD</b>文件</span></div>
<div class="btn" style="left:850px;width:88px;background:#d15b47"><span style="left:10.5px;font-weight:normal;font-size:14px">€</span><span style="left:25px">费用维护</span></div>
<div class="btn" style="left:942px;width:106px;background:#8b9aa3;border:2px solid #9fb0ba;line-height:25px"><svg class="" width="12" height="12" style="position:absolute;left:9px;top:7px;color:#fff;" ><use href="#i-cog"/></svg><span style="left:27px">系统操作</span><svg class="" width="9" height="6" style="position:absolute;left:86px;top:10px;color:#fff;" ><use href="#i-chev"/></svg></div>
<div class="abs" style="left:1789px;top:203px;width:40px;height:34px;border:1px solid #ccc;background:#fff"></div>
<div class="abs" style="left:1829px;top:203px;width:57px;height:34px;border:1px solid #ccc;border-radius:0 4px 4px 0;background:#fff"></div>
<svg class="" width="14" height="14" style="position:absolute;left:1802px;top:212.2px;color:#333;" ><use href="#i-refresh"/></svg>
<svg class="" width="13" height="13" style="position:absolute;left:1842px;top:213px;color:#333;" ><use href="#i-th"/></svg>
<svg class="" width="9" height="6" style="position:absolute;left:1864px;top:217.5px;color:#333;" ><use href="#i-chev"/></svg>
<div id="tbl">
<div class="th" style="left:0px;width:31px"><div class="cb" style="left:9px;top:13px"></div></div>
<div class="th" style="left:31px;width:100px">操作</div>
<div class="th" style="left:131px;width:120px">卖货单号</div>
<div class="th" style="left:251px;width:80px">客户代码</div>
<div class="th" style="left:331px;width:120px">订单号</div>
<div class="th" style="left:451px;width:140px">客户单号</div>
<div class="th" style="left:591px;width:120px">柜号</div>
<div class="th" style="left:711px;width:120px">交货方式</div>
<div class="th" style="left:831px;width:100px">卖货代理</div>
<div class="th" style="left:931px;width:100px">卖货产品</div>
<div class="th" style="left:1031px;width:135px">集货仓</div>
<div class="th" style="left:1166px;width:135px">目的地</div>
<div class="th" style="left:1301px;width:100px">子运单状态</div>
<div class="th" style="left:1401px;width:80px">总体积</div>
<div class="th" style="left:1481px;width:80px">总毛重</div>
<div class="th" style="left:1561px;width:80px">总箱数</div>
<div class="th" style="left:1641px;width:80px">出库时间</div>
<div class="td odd" style="left:0px;top:42px;width:31px;padding-top:8px"><div class="cb" style="left:8px;top:8px"></div></div>
<div class="td odd" style="left:31px;top:42px;width:100px;padding-top:8px"><div class="more" style="top:7px">更多操作<svg class="" width="8" height="5" style="position:absolute;left:56.8px;top:10px;color:#333;" ><use href="#i-chev"/></svg></div></div>
<div class="td odd" style="left:131px;top:42px;width:120px;padding-top:8px"><span class="lnk" style="letter-spacing:.25px">MH260407074</span></div>
<div class="td odd" style="left:251px;top:42px;width:80px;padding-top:8px"><span style="letter-spacing:-.6px">OSS01</span></div>
<div class="td odd" style="left:331px;top:42px;width:120px;padding-top:8px">DC26048410005</div>
<div class="td odd" style="left:451px;top:42px;width:140px;padding-top:8px"><span style="letter-spacing:-.3px">FBA199GG3T4Q</span></div>
<div class="td odd" style="left:591px;top:42px;width:120px;padding-top:8px"></div>
<div class="td odd" style="left:711px;top:42px;width:120px;padding-top:8px">送货到仓</div>
<div class="td odd" style="left:831px;top:42px;width:100px;padding-top:8px">凯琦</div>
<div class="td odd" style="left:931px;top:42px;width:100px;padding-top:8px">凯琦-Resell-普船<br>海卡</div>
<div class="td odd" style="left:1031px;top:42px;width:135px;padding-top:8px"><span class="lnk" style="letter-spacing:-.3px">KQHB01</span></div>
<div class="td odd" style="left:1166px;top:42px;width:135px;padding-top:8px"><span class="lnk" style="letter-spacing:-.8px">US_SAT4</span></div>
<div class="td odd" style="left:1301px;top:42px;width:100px;padding-top:8px"><span style="color:#111">已预报</span></div>
<div class="td odd" style="left:1401px;top:42px;width:80px;padding-top:8px">0.304</div>
<div class="td odd" style="left:1481px;top:42px;width:80px;padding-top:8px">169.310</div>
<div class="td odd" style="left:1561px;top:42px;width:80px;padding-top:8px">8</div>
<div class="td odd" style="left:1641px;top:42px;width:80px;padding-top:8px"></div>
<div class="td even" style="left:0px;top:96px;width:31px"><div class="cb" style="left:8px;top:9px"></div></div>
<div class="td even" style="left:31px;top:96px;width:100px"><div class="more" style="top:8px">更多操作<svg class="" width="8" height="5" style="position:absolute;left:56.8px;top:10px;color:#333;" ><use href="#i-chev"/></svg></div></div>
<div class="td even" style="left:131px;top:96px;width:120px"><span class="lnk" style="letter-spacing:.25px">MH260407073</span></div>
<div class="td even" style="left:251px;top:96px;width:80px"><span style="letter-spacing:-.6px">OSS01</span></div>
<div class="td even" style="left:331px;top:96px;width:120px">DC26048410004</div>
<div class="td even" style="left:451px;top:96px;width:140px"><span style="letter-spacing:-.3px">FBA199GH709W</span></div>
<div class="td even" style="left:591px;top:96px;width:120px"></div>
<div class="td even" style="left:711px;top:96px;width:120px">送货到仓</div>
<div class="td even" style="left:831px;top:96px;width:100px">凯琦</div>
<div class="td even" style="left:931px;top:96px;width:100px">凯琦-Resell-普船<br>海卡</div>
<div class="td even" style="left:1031px;top:96px;width:135px"><span class="lnk" style="letter-spacing:-.3px">KQHB01</span></div>
<div class="td even" style="left:1166px;top:96px;width:135px"><span class="lnk" style="letter-spacing:-.8px">US_SMF6</span></div>
<div class="td even" style="left:1301px;top:96px;width:100px"><span style="color:#111">已预报</span></div>
<div class="td even" style="left:1401px;top:96px;width:80px">0.307</div>
<div class="td even" style="left:1481px;top:96px;width:80px">169.320</div>
<div class="td even" style="left:1561px;top:96px;width:80px">8</div>
<div class="td even" style="left:1641px;top:96px;width:80px"></div>
<div class="td odd" style="left:0px;top:150px;width:31px"><div class="cb" style="left:8px;top:9px"></div></div>
<div class="td odd" style="left:31px;top:150px;width:100px"><div class="more" style="top:8px">更多操作<svg class="" width="8" height="5" style="position:absolute;left:56.8px;top:10px;color:#333;" ><use href="#i-chev"/></svg></div></div>
<div class="td odd" style="left:131px;top:150px;width:120px"><span class="lnk" style="letter-spacing:.25px">MH260407072</span></div>
<div class="td odd" style="left:251px;top:150px;width:80px"><span style="letter-spacing:-.6px">OSS01</span></div>
<div class="td odd" style="left:331px;top:150px;width:120px">DC26048410003</div>
<div class="td odd" style="left:451px;top:150px;width:140px"><span style="letter-spacing:-.3px">FBA199GHL2XH</span></div>
<div class="td odd" style="left:591px;top:150px;width:120px"></div>
<div class="td odd" style="left:711px;top:150px;width:120px">送货到仓</div>
<div class="td odd" style="left:831px;top:150px;width:100px">凯琦</div>
<div class="td odd" style="left:931px;top:150px;width:100px">凯琦-Resell-普船<br>海卡</div>
<div class="td odd" style="left:1031px;top:150px;width:135px"><span class="lnk" style="letter-spacing:-.3px">KQHB01</span></div>
<div class="td odd" style="left:1166px;top:150px;width:135px"><span class="lnk" style="letter-spacing:-.8px">US_TEB4</span></div>
<div class="td odd" style="left:1301px;top:150px;width:100px"><span style="color:#111">已预报</span></div>
<div class="td odd" style="left:1401px;top:150px;width:80px">0.343</div>
<div class="td odd" style="left:1481px;top:150px;width:80px">188.750</div>
<div class="td odd" style="left:1561px;top:150px;width:80px">9</div>
<div class="td odd" style="left:1641px;top:150px;width:80px"></div>
<div class="td even" style="left:0px;top:204px;width:31px"><div class="cb" style="left:8px;top:9px"></div></div>
<div class="td even" style="left:31px;top:204px;width:100px"><div class="more" style="top:8px">更多操作<svg class="" width="8" height="5" style="position:absolute;left:56.8px;top:10px;color:#333;" ><use href="#i-chev"/></svg></div></div>
<div class="td even" style="left:131px;top:204px;width:120px"><span class="lnk" style="letter-spacing:.25px">MH260407036</span></div>
<div class="td even" style="left:251px;top:204px;width:80px"><span style="letter-spacing:-.6px">YGX01</span></div>
<div class="td even" style="left:331px;top:204px;width:120px">DC260416780002</div>
<div class="td even" style="left:451px;top:204px;width:140px"><span style="letter-spacing:-.3px">FBA199T3932B</span></div>
<div class="td even" style="left:591px;top:204px;width:120px"></div>
<div class="td even" style="left:711px;top:204px;width:120px">送货到仓</div>
<div class="td even" style="left:831px;top:204px;width:100px">凯琦</div>
<div class="td even" style="left:931px;top:204px;width:100px">凯琦-Resell-普船<br>海卡</div>
<div class="td even" style="left:1031px;top:204px;width:135px"><span class="lnk" style="letter-spacing:-.3px">KQHB01</span></div>
<div class="td even" style="left:1166px;top:204px;width:135px"><span class="lnk" style="letter-spacing:-.8px">US_SCK8</span></div>
<div class="td even" style="left:1301px;top:204px;width:100px"><span style="color:#111">已预报</span></div>
<div class="td even" style="left:1401px;top:204px;width:80px">1.167</div>
<div class="td even" style="left:1481px;top:204px;width:80px">142.330</div>
<div class="td even" style="left:1561px;top:204px;width:80px">15</div>
<div class="td even" style="left:1641px;top:204px;width:80px"></div>
<div class="td odd" style="left:0px;top:258px;width:31px"><div class="cb" style="left:8px;top:9px"></div></div>
<div class="td odd" style="left:31px;top:258px;width:100px"><div class="more" style="top:8px">更多操作<svg class="" width="8" height="5" style="position:absolute;left:56.8px;top:10px;color:#333;" ><use href="#i-chev"/></svg></div></div>
<div class="td odd" style="left:131px;top:258px;width:120px"><span class="lnk" style="letter-spacing:.25px">MH260407035</span></div>
<div class="td odd" style="left:251px;top:258px;width:80px"><span style="letter-spacing:-.6px">YGX01</span></div>
<div class="td odd" style="left:331px;top:258px;width:120px">DC260416780001</div>
<div class="td odd" style="left:451px;top:258px;width:140px"><span style="letter-spacing:-.3px">FBA199T2Z2Q1</span></div>
<div class="td odd" style="left:591px;top:258px;width:120px"></div>
<div class="td odd" style="left:711px;top:258px;width:120px">送货到仓</div>
<div class="td odd" style="left:831px;top:258px;width:100px">凯琦</div>
<div class="td odd" style="left:931px;top:258px;width:100px">凯琦-Resell-普船<br>海卡</div>
<div class="td odd" style="left:1031px;top:258px;width:135px"><span class="lnk" style="letter-spacing:-.3px">KQHB01</span></div>
<div class="td odd" style="left:1166px;top:258px;width:135px"><span class="lnk" style="letter-spacing:-.8px">US_HGR6</span></div>
<div class="td odd" style="left:1301px;top:258px;width:100px"><span style="color:#111">已预报</span></div>
<div class="td odd" style="left:1401px;top:258px;width:80px">0.565</div>
<div class="td odd" style="left:1481px;top:258px;width:80px">98.270</div>
<div class="td odd" style="left:1561px;top:258px;width:80px">10</div>
<div class="td odd" style="left:1641px;top:258px;width:80px"></div>
</div>
<div class="abs" style="left:223px;top:564px;width:1664px;height:8px;background:#e8e8e8;border-radius:0 0 4px 4px"></div>
<div class="abs" style="left:223px;top:564px;width:1096px;height:8px;background:#b3b3b3;border-radius:4px"></div>
<div class="abs" style="left:942px;top:238px;width:160px;height:40px;background:#fff;border:1px solid #c9c9c9;box-shadow:0 2px 4px rgba(0,0,0,.2);font-size:13px;color:#333;line-height:37px;padding-left:12px">线下申报</div>
<div class="abs" style="left:33px;top:272.5px;width:122px;height:28.5px;border:4px solid #f5504f;border-radius:3px"></div>
<svg class="abs" style="left:170px;top:230px;pointer-events:none" width="790" height="60" viewBox="170 230 790 60"><polygon points="179,280.7 400,272.9 640,264.0 913,253.2 912.8,246 946.8,257.6 913.6,271.4 913.3,263.9 640,269.8 400,275.8 179,281.5" fill="#f5504f"/></svg>
</body>
</html>
